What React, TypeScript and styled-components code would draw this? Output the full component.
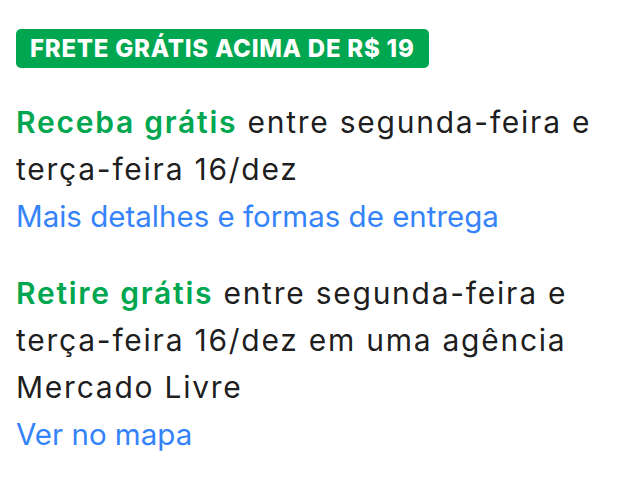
import React from 'react';
import styled, { createGlobalStyle } from 'styled-components';

const GlobalStyle = createGlobalStyle`
  body {
    margin: 0;
    background: #fff;
    font-family: Inter, 'Liberation Sans', sans-serif;
  }
`;

const Container = styled.div`
  padding: 29px 16px 0;
  display: flex;
  flex-direction: column;
  align-items: flex-start;
`;

const Badge = styled.div`
  background: #00a650;
  color: #fff;
  font-weight: 800;
  font-size: 24px;
  height: 39px;
  line-height: 40px;
  padding: 0 14px;
  border-radius: 5px;
  letter-spacing: 0.75px;
`;

const Block = styled.div<{ $gap: number }>`
  margin-top: ${(props) => props.$gap}px;
  font-size: 30px;
  line-height: 46.8px;
  letter-spacing: 1.75px;
  color: rgba(0, 0, 0, 0.9);
  width: 600px;
`;

const Highlight = styled.span`
  color: #00a650;
  font-weight: 600;
`;

const Link = styled.a`
  display: block;
  color: #3483fa;
  font-size: 29.5px;
  letter-spacing: 0;
  text-decoration: none;
  cursor: pointer;
`;

const App = () => (
  <>
    <GlobalStyle />
    <Container>
      <Badge>FRETE GRÁTIS ACIMA DE R$ 19</Badge>
      <Block $gap={31}>
        <Highlight>Receba grátis</Highlight> entre segunda-feira e terça-feira 16/dez
        <Link>Mais detalhes e formas de entrega</Link>
      </Block>
      <Block $gap={31}>
        <Highlight>Retire grátis</Highlight> entre segunda-feira e terça-feira 16/dez em uma agência
        Mercado Livre
        <Link>Ver no mapa</Link>
      </Block>
    </Container>
  </>
);

export default App;
